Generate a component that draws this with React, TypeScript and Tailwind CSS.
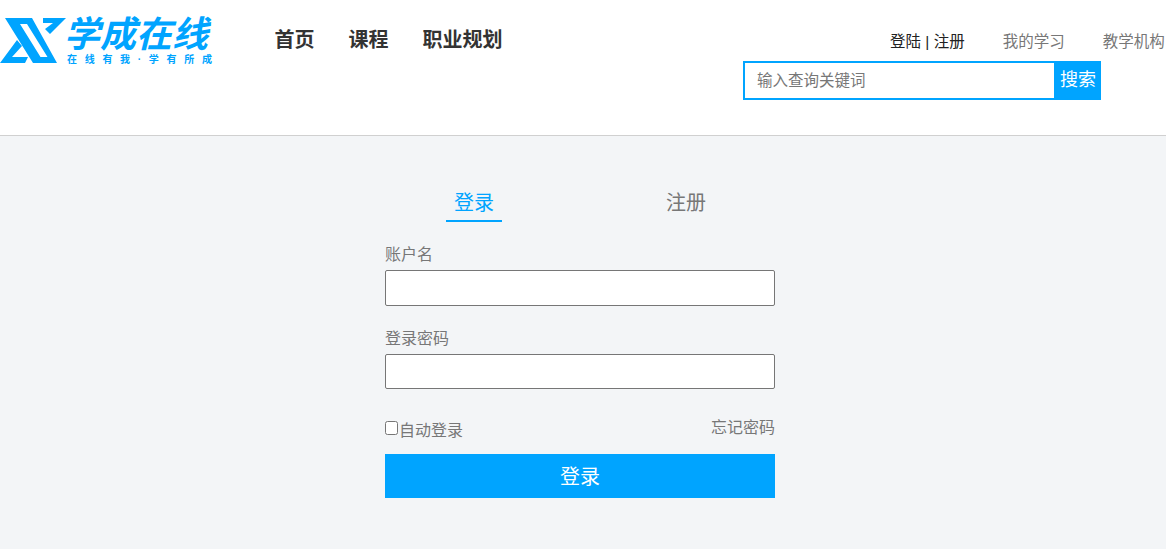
import type { ReactNode } from "react";

const cjk = "font-['Liberation_Sans','Noto_Sans_CJK_SC',sans-serif]";

function LogoMark() {
  return (
    <svg width="66" height="47" viewBox="0 17 66 47" className="shrink-0">
      <path
        fill="#00a4ff"
        fillRule="evenodd"
        d="M5 18H32L57 63H33L5 18ZM20 24L40.5 57H47.5L27 24H20Z"
      />
      <path fill="#00a4ff" d="M43 18H66L50 34L45 29L53 23H43Z" />
      <path fill="#00a4ff" d="M17 40L22 46L12 57H28L25 63H0L17 40Z" />
    </svg>
  );
}

function NavLink({ children }: { children: ReactNode }) {
  return <a className="text-[20px] leading-[28px] font-bold text-[#333]">{children}</a>;
}

function Field({ label, inputClass }: { label: string; inputClass: string }) {
  return (
    <div className="flex flex-col">
      <label className="text-[16px] leading-[26px] mb-[2px] text-[#777]">{label}</label>
      <input
        type="text"
        className={`w-[390px] bg-white border border-[#767676] rounded-[2px] outline-none ${inputClass}`}
      />
    </div>
  );
}

export default function App() {
  return (
    <div className={`${cjk} min-h-screen flex flex-col bg-[#f3f5f7]`}>
      <header className="h-[136px] bg-white border-b border-[#d0d0d0] flex items-start overflow-hidden">
        <div className="flex items-start w-[274.5px] pt-[17px]">
          <LogoMark />
          <div className="-ml-[2px] -mt-[1px] flex flex-col">
            <span className="text-[36px] leading-[37px] font-bold italic text-[#00a4ff] whitespace-nowrap">
              学成在线
            </span>
            <span className="ml-[3px] text-[10px] leading-[13px] font-bold text-[#00a4ff] tracking-[7.7px] whitespace-nowrap">
              在线有我·学有所成
            </span>
          </div>
        </div>
        <nav className="flex gap-[34px] pt-[26px]">
          <NavLink>首页</NavLink>
          <NavLink>课程</NavLink>
          <NavLink>职业规划</NavLink>
        </nav>
        <div className="ml-auto flex flex-col items-start w-[423px] pt-[30px]">
          <div className="flex text-[15.5px] leading-[24px] whitespace-nowrap pl-[147px]">
            <span className="text-[#222]">登陆 | 注册</span>
            <span className="ml-[38px] text-[#777]">我的学习</span>
            <span className="ml-[38px] text-[#777]">教学机构</span>
          </div>
          <div className="flex h-[39px] mt-[7px]">
            <div className="w-[311px] border-2 border-r-0 border-[#00a4ff] flex items-center pl-[12px]">
              <span className="text-[15.5px] text-[#777]">输入查询关键词</span>
            </div>
            <button className="w-[47px] pl-[1px] bg-[#00a4ff] text-white text-[18px]">搜索</button>
          </div>
        </div>
      </header>

      <main className="flex flex-col items-start pl-[385px]">
        <div className="h-[86px] w-[390px] flex items-start">
          <div className="ml-[61px] mt-[53px] w-[56px] h-[33px] border-b-2 border-[#00a4ff] text-center text-[20px] leading-[28px] text-[#00a4ff]">
            登录
          </div>
          <div className="ml-[164px] mt-[53px] text-[20px] leading-[28px] text-[#777]">注册</div>
        </div>
        <div className="flex flex-col gap-[20px] mt-[20px]">
          <Field label="账户名" inputClass="h-[36px]" />
          <Field label="登录密码" inputClass="h-[35px]" />
        </div>
        <div className="w-[390px] flex justify-between mt-[27px] text-[16px] leading-[24px] text-[#777]">
          <label className="flex items-start">
            <input
              type="checkbox"
              className="w-[13px] h-[14px] mt-[5px] mr-[2px] appearance-none bg-white border border-[#767676] rounded-[2.5px]"
            />
            <span className="mt-[3px] -ml-[1px]">自动登录</span>
          </label>
          <a>忘记密码</a>
        </div>
        <button className="w-[390px] h-[44px] mt-[11px] pt-[1px] bg-[#00a4ff] text-white text-[20px]">登录</button>
      </main>
    </div>
  );
}
